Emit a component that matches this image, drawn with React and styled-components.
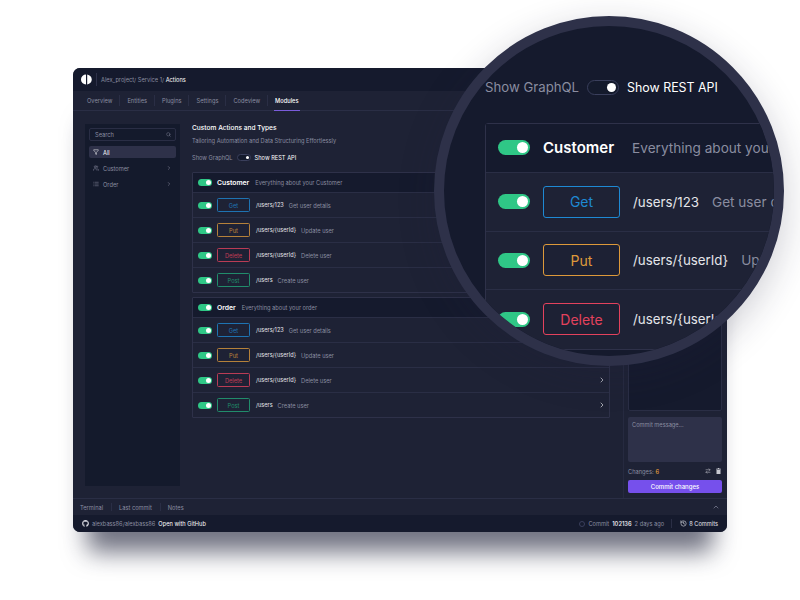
import React from "react";
import styled, { createGlobalStyle } from "styled-components";
import { FaGithub } from "react-icons/fa";
import {
  ArrowRightLeft,
  ChevronRight,
  ChevronUp,
  Filter,
  History,
  List,
  Search,
  Users,
} from "lucide-react";

const METHODS = {
  Get: "#1f8fdc",
  Put: "#e8a13c",
  Delete: "#ef4560",
  Post: "#22b07d",
};

const ROWS = [
  { method: "Get", path: "/users/123", text: "Get user details" },
  { method: "Put", path: "/users/{userId}", text: "Update user" },
  { method: "Delete", path: "/users/{userId}", text: "Delete user" },
  { method: "Post", path: "/users", text: "Create user" },
];

const GlobalStyle = createGlobalStyle`
  html, body {
    margin: 0;
    background: #fff;
    font-family: "Inter", "Liberation Sans", sans-serif;
  }
`;

const Stage = styled.div`
  position: relative;
  width: 800px;
  height: 600px;
  padding: 68px 0 0 73px;
  box-sizing: border-box;
  overflow: hidden;
`;

const Window = styled.div`
  position: relative;
  width: 654px;
  height: 464px;
  display: flex;
  flex-direction: column;
  background: #1e2235;
  border-radius: 7px;
  overflow: hidden;
  color: #fff;
  font-size: 5.7px;
`;

const Shadow = styled.div`
  position: absolute;
  left: 85px;
  top: 100px;
  width: 630px;
  height: 432px;
  border-radius: 8px;
  box-shadow: 0 22px 24px -2px rgba(24, 28, 52, 0.62);
`;

const TopBar = styled.div`
  height: 23px;
  display: flex;
  align-items: center;
  padding-left: 8px;
  background: #151a2d;
  flex: none;
`;

const Logo = styled.svg`
  width: 11px;
  height: 11px;
  margin-right: 4px;
`;

const Crumbs = styled.div`
  height: 13px;
  display: flex;
  align-items: center;
  padding-left: 4px;
  border-left: 1px solid #2e3149;
  color: #8a8da0;
  white-space: pre;
  span {
    color: #fff;
  }
`;

const Tabs = styled.div`
  height: 20px;
  display: flex;
  flex: none;
  box-sizing: border-box;
  padding-left: 6.5px;
  border-bottom: 1px solid #2a2e45;
`;

const Tab = styled.div`
  position: relative;
  display: flex;
  align-items: center;
  padding: 0 7.5px;
  color: ${(p) => (p.$active ? "#fff" : "#8a8da0")};
  font-weight: ${(p) => (p.$active ? 500 : 400)};
  &::after {
    content: "";
    position: absolute;
    right: 0;
    top: 4px;
    bottom: 4px;
    width: 1px;
    background: ${(p) => (p.$active ? "transparent" : "#2a2e45")};
  }
`;

const TabLine = styled.div`
  position: absolute;
  left: 6.5px;
  right: 6.5px;
  bottom: -1px;
  height: 1.5px;
  background: #7a5cdb;
`;

const Body = styled.div`
  flex: 1;
  display: flex;
  min-height: 0;
`;

const Sidebar = styled.div`
  width: 95px;
  margin: 13px 0 12px 12px;
  padding: 4px;
  box-sizing: border-box;
  background: #141a2c;
  flex: none;
`;

const SearchBox = styled.div`
  height: 13px;
  display: flex;
  align-items: center;
  justify-content: space-between;
  padding: 0 4px 0 5px;
  box-sizing: border-box;
  border: 1px solid #2a2e45;
  border-radius: 2px;
  color: #8a8da0;
  margin-bottom: 5px;
`;

const SideItem = styled.div`
  height: 12px;
  display: flex;
  align-items: center;
  gap: 4px;
  padding: 0 4px;
  margin-bottom: 4px;
  border-radius: 2px;
  color: ${(p) => (p.$active ? "#fff" : "#8a8da0")};
  background: ${(p) => (p.$active ? "#2e3149" : "transparent")};
  svg:nth-child(2) {
    margin-left: auto;
  }
`;

const Content = styled.div`
  flex: 1;
  padding: 13px 13px 0 12px;
  min-width: 0;
`;

const Title = styled.div`
  font-size: 6.6px;
  font-weight: 500;
  line-height: 8px;
`;

const Subtitle = styled.div`
  margin-top: 4.5px;
  line-height: 7px;
  color: #8a8da0;
`;

const ToggleRow = styled.div`
  display: flex;
  align-items: center;
  color: #8a8da0;
  white-space: nowrap;
  margin-top: ${(p) => (p.$big ? "54px" : "10.5px")};
  margin-bottom: ${(p) => (p.$big ? "28px" : "11px")};
  gap: ${(p) => (p.$big ? "8px" : "4px")};
  font-size: ${(p) => (p.$big ? "13.2px" : "5.7px")};
  line-height: ${(p) => (p.$big ? "15px" : "7px")};
  strong {
    color: #fff;
    font-weight: 400;
    font-size: ${(p) => (p.$big ? "12.4px" : "5.7px")};
  }
`;

const Switch = styled.div`
  display: flex;
  align-items: center;
  justify-content: flex-end;
  box-sizing: border-box;
  flex: none;
  width: ${(p) => (p.$big ? "32px" : "14px")};
  height: ${(p) => (p.$big ? "15px" : "7px")};
  padding: ${(p) => (p.$big ? "2px" : "1px")};
  border-radius: 8px;
  background: ${(p) => (p.$on ? "#2fc786" : "#141a2c")};
  border: ${(p) => (p.$on ? "none" : "1px solid #3a3f5c")};
  &::after {
    content: "";
    height: 100%;
    aspect-ratio: 1;
    border-radius: 50%;
    background: #fff;
  }
`;

const Table = styled.div`
  border: 1px solid #2e3149;
  border-radius: ${(p) => (p.$big ? "3px" : "1px")};
  margin-bottom: 4px;
  width: ${(p) => (p.$big ? "600px" : "auto")};
`;

const HeadRow = styled.div`
  display: flex;
  align-items: center;
  background: #151a2d;
  border-bottom: 1px solid #2a2e45;
  box-sizing: border-box;
  height: ${(p) => (p.$big ? "49px" : "20px")};
  padding: ${(p) => (p.$big ? "0 0 1px 12px" : "0 0 0 5px")};
  gap: ${(p) => (p.$big ? "13px" : "5px")};
`;

const GroupName = styled.div`
  font-weight: 600;
  font-size: ${(p) => (p.$big ? "15px" : "6.8px")};
`;

const Muted = styled.div`
  color: #8a8da0;
  white-space: nowrap;
  font-size: ${(p) => (p.$big ? "13.6px" : "5.7px")};
`;

const HeadNote = styled(Muted)`
  margin-left: ${(p) => (p.$big ? "5px" : "1px")};
`;

const ApiRow = styled.div`
  display: flex;
  align-items: center;
  border-bottom: 1px solid #2a2e45;
  box-sizing: border-box;
  height: ${(p) => (p.$big ? "58.5px" : "25px")};
  padding: ${(p) => (p.$big ? "0 0 0 12px" : "0 3px 0 5px")};
  gap: ${(p) => (p.$big ? "13px" : "5px")};
  &:last-child {
    border-bottom: none;
    height: ${(p) => (p.$big ? "58.5px" : "24px")};
  }
`;

const Method = styled.div`
  display: flex;
  align-items: center;
  justify-content: center;
  flex: none;
  box-sizing: border-box;
  color: ${(p) => p.$color};
  border: 1px solid ${(p) => p.$color};
  width: ${(p) => (p.$big ? "77px" : "33px")};
  height: ${(p) => (p.$big ? "32px" : "14px")};
  border-radius: ${(p) => (p.$big ? "3px" : "1.5px")};
  font-size: ${(p) => (p.$big ? "14px" : "5.7px")};
  opacity: ${(p) => (p.$big ? 0.95 : 0.75)};
  margin-right: ${(p) => (p.$big ? "0" : "1px")};
`;

const Path = styled.div`
  white-space: nowrap;
  color: #e4e5ea;
  font-size: ${(p) => (p.$big ? "13.3px" : "5.6px")};
`;

const RowArrow = styled(ChevronRight)`
  margin-left: auto;
  color: #e4e5ea;
`;

const RightPanel = styled.div`
  width: 104px;
  flex: none;
  display: flex;
  flex-direction: column;
  padding: 5px 5px 5px 4px;
  box-sizing: border-box;
  border-left: 1px solid #262a40;
  background: #1e2235;
`;

const ChangesBox = styled.div`
  flex: 1;
  background: #151a2d;
  border: 1px solid #2a2e45;
  border-radius: 2px;
`;

const MessageBox = styled.div`
  height: 45px;
  margin-top: 6px;
  padding: 4px;
  box-sizing: border-box;
  background: #2e3149;
  border-radius: 2px;
  color: #8a8da0;
`;

const ChangesRow = styled.div`
  display: flex;
  align-items: center;
  gap: 5px;
  height: 18px;
  padding-right: 1px;
  color: #8a8da0;
  b {
    color: #e8a13c;
    font-weight: 500;
    margin-left: -3px;
  }
  svg:first-of-type {
    margin-left: auto;
  }
`;

const CommitButton = styled.div`
  height: 13px;
  display: flex;
  align-items: center;
  justify-content: center;
  border-radius: 2px;
  background: #7650ec;
  color: #fff;
  font-size: 6px;
  font-weight: 500;
`;

const BottomTabs = styled.div`
  height: 17px;
  flex: none;
  display: flex;
  align-items: stretch;
  box-sizing: border-box;
  padding: 0 7px 0 0;
  border-top: 1px solid #2a2e45;
  color: #8a8da0;
`;

const BottomTab = styled.div`
  display: flex;
  align-items: center;
  padding: 0 8px 0 7px;
  margin: 4px 0;
  border-right: ${(p) => (p.$last ? "none" : "1px solid #2a2e45")};
`;

const BottomArrow = styled(ChevronUp)`
  margin: auto 0 auto auto;
  color: #8a8da0;
`;

const Footer = styled.div`
  height: 17px;
  flex: none;
  display: flex;
  align-items: center;
  padding: 0 9px;
  background: #151a2d;
  color: #8a8da0;
  white-space: nowrap;
`;

const GitLink = styled.span`
  color: #fff;
  margin-left: 3px;
`;

const RepoIcon = styled(FaGithub)`
  color: #d8d9e0;
  width: 7px;
  height: 7px;
  margin-right: 3px;
`;

const CommitDot = styled.span`
  width: 6px;
  height: 6px;
  margin-left: auto;
  margin-right: 3px;
  border: 1px solid #3a3f5c;
  border-radius: 50%;
  box-sizing: border-box;
`;

const CommitHash = styled.b`
  color: #e4e5ea;
  font-weight: 600;
  margin: 0 3px;
`;

const CommitCount = styled.div`
  display: flex;
  align-items: center;
  gap: 2px;
  height: 9px;
  margin-left: 7px;
  padding-left: 8px;
  border-left: 1px solid #2a2e45;
  color: #e4e5ea;
`;

const Lens = styled.div`
  position: absolute;
  left: 434px;
  top: 16px;
  width: 350px;
  height: 350px;
  box-sizing: border-box;
  border: 10px solid #2e3149;
  border-radius: 50%;
  background: #151a2d;
  overflow: hidden;
  padding-left: 41px;
  box-shadow: 0 10px 36px rgba(30, 34, 60, 0.22);
  color: #fff;
`;

const LensFill = styled.div`
  background: #1e2235;
`;

function ApiTable({ name, text, big }) {
  return (
    <Table $big={big}>
      <HeadRow $big={big}>
        <Switch $on $big={big} />
        <GroupName $big={big}>{name}</GroupName>
        <HeadNote $big={big}>{text}</HeadNote>
      </HeadRow>
      <LensFill>
        {(big ? ROWS.slice(0, 3) : ROWS).map((row) => (
          <ApiRow $big={big} key={row.method}>
            <Switch $on $big={big} />
            <Method $big={big} $color={METHODS[row.method]}>
              {row.method}
            </Method>
            <Path $big={big}>{row.path}</Path>
            <Muted $big={big}>{row.text}</Muted>
            {!big && <RowArrow size={8} />}
          </ApiRow>
        ))}
      </LensFill>
    </Table>
  );
}

export default function App() {
  return (
    <Stage>
      <GlobalStyle />
      <Shadow />
      <Window>
        <TopBar>
          <Logo viewBox="0 0 22 22">
            <path d="M10 1A10 10 0 0 0 10 21Z" fill="#fff" />
            <path d="M12.4 1C18 2 21.5 6 21.5 11s-3.5 9-9.1 10Z" fill="#fff" />
          </Logo>
          <Crumbs>
            Alex_project/ Service 1/ <span>Actions</span>
          </Crumbs>
        </TopBar>
        <Tabs>
          <Tab>Overview</Tab>
          <Tab>Entities</Tab>
          <Tab>Plugins</Tab>
          <Tab>Settings</Tab>
          <Tab>Codeview</Tab>
          <Tab $active>
            Modules
            <TabLine />
          </Tab>
        </Tabs>
        <Body>
          <Sidebar>
            <SearchBox>
              Search
              <Search size={5} />
            </SearchBox>
            <SideItem $active>
              <Filter size={6} />
              All
            </SideItem>
            <SideItem>
              <Users size={6} />
              Customer
              <ChevronRight size={6} />
            </SideItem>
            <SideItem>
              <List size={6} />
              Order
              <ChevronRight size={6} />
            </SideItem>
          </Sidebar>
          <Content>
            <Title>Custom Actions and Types</Title>
            <Subtitle>Tailoring Automation and Data Structuring Effortlessly</Subtitle>
            <ToggleRow>
              Show GraphQL
              <Switch $big={false} />
              <strong>Show REST API</strong>
            </ToggleRow>
            <ApiTable name="Customer" text="Everything about your Customer" />
            <ApiTable name="Order" text="Everything about your order" />
          </Content>
          <RightPanel>
            <ChangesBox />
            <MessageBox>Commit message...</MessageBox>
            <ChangesRow>
              Changes: <b>6</b>
              <ArrowRightLeft size={6} color="#c8c9d2" />
              <svg width="5" height="6" viewBox="0 0 10 12">
                <path d="M3.5 0h3v1.5H10V3H0V1.5h3.5zM1 4h8v8H1z" fill="#c8c9d2" />
              </svg>
            </ChangesRow>
            <CommitButton>Commit changes</CommitButton>
          </RightPanel>
        </Body>
        <BottomTabs>
          <BottomTab>Terminal</BottomTab>
          <BottomTab>Last commit</BottomTab>
          <BottomTab $last>Notes</BottomTab>
          <BottomArrow size={8} />
        </BottomTabs>
        <Footer>
          <RepoIcon />
          alexbass86/alexbass86
          <GitLink>Open with GitHub</GitLink>
          <CommitDot />
          Commit
          <CommitHash>102136</CommitHash>
          2 days ago
          <CommitCount>
            <History size={7} />8 Commits
          </CommitCount>
        </Footer>
      </Window>
      <Lens>
        <ToggleRow $big>
          Show GraphQL
          <Switch $big />
          <strong>Show REST API</strong>
        </ToggleRow>
        <ApiTable big name="Customer" text="Everything about your Customer" />
      </Lens>
    </Stage>
  );
}
